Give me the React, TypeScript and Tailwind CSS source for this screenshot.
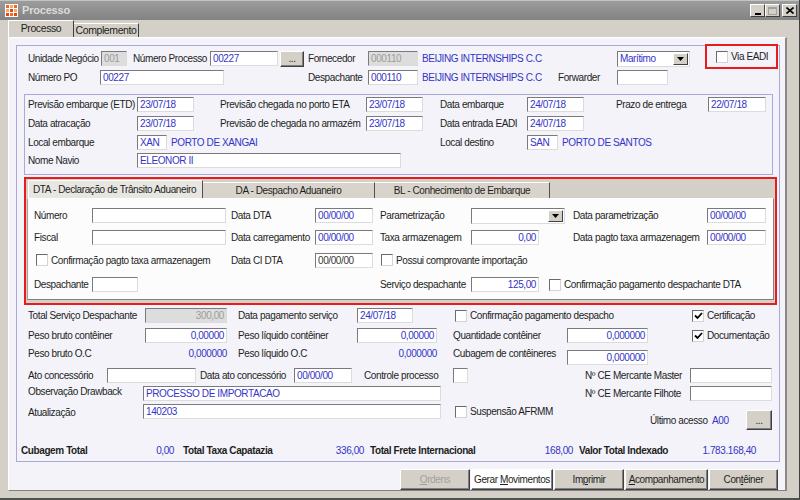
import React from 'react'

// campos no estilo Windows clássico
type FieldProps = { w: string; v?: string; r?: boolean; dis?: boolean; dark?: boolean; c?: string }

function Field({ w, v = '', r, dis, dark, c = '' }: FieldProps) {
  const tone = dis ? 'bg-[#dddddd] text-[#9c9c9c]' : dark ? 'bg-white text-[#3a3a3a]' : 'bg-white text-[#3434c8]'
  return (
    <div
      className={`${w} ${c} ${tone} ${r ? 'text-right' : ''} h-[15px] shrink-0 border border-t-[#7a7a7a] border-l-[#7a7a7a] border-r-[#dcdcdc] border-b-[#dcdcdc] px-[2px] leading-[13px] whitespace-nowrap overflow-hidden`}
    >
      {v}
    </div>
  )
}

function L({ w, c = '', children }: { w: string; c?: string; children: React.ReactNode }) {
  return <span className={`${w} ${c} shrink-0 whitespace-nowrap`}>{children}</span>
}

function Blue({ w = '', c = '', children }: { w?: string; c?: string; children: React.ReactNode }) {
  return <span className={`${w} ${c} shrink-0 whitespace-nowrap text-[#3434c8]`}>{children}</span>
}

function Select({ w, v = '' }: { w: string; v?: string }) {
  return (
    <div className={`${w} h-[16px] shrink-0 bg-white border border-t-[#7a7a7a] border-l-[#7a7a7a] border-r-[#dcdcdc] border-b-[#dcdcdc] flex items-center`}>
      <span className="flex-1 pl-[2px] text-[#3434c8] whitespace-nowrap">{v}</span>
      <span className="w-[15px] h-[12px] mr-[1px] bg-[#d4d0c8] border border-t-white border-l-white border-r-[#404040] border-b-[#404040] flex items-center justify-center">
        <svg width="7" height="4" viewBox="0 0 7 4">
          <path d="M0 0 H7 L3.5 4 Z" fill="#000" />
        </svg>
      </span>
    </div>
  )
}

function Check({ label, on, c = '' }: { label: string; on?: boolean; c?: string }) {
  return (
    <div className={`${c} flex items-center shrink-0 whitespace-nowrap`}>
      <span className="w-[12px] h-[12px] shrink-0 bg-white border border-t-[#6a6a6a] border-l-[#6a6a6a] border-r-[#d4d4d4] border-b-[#d4d4d4] flex items-center justify-center">
        {on && (
          <svg width="9" height="8" viewBox="0 0 9 8">
            <path d="M1 3.5 L3.5 6 L8 1" stroke="#000" strokeWidth="1.8" fill="none" />
          </svg>
        )}
      </span>
      <span className="ml-[3px]">{label}</span>
    </div>
  )
}

function Btn({ c = '', children }: { c?: string; children: React.ReactNode }) {
  return (
    <div
      className={`${c} shrink-0 flex items-center justify-center whitespace-nowrap border border-t-white border-l-white border-r-[#404040] border-b-[#404040] shadow-[inset_-1px_-1px_0_#808080]`}
    >
      {children}
    </div>
  )
}

function AppIcon() {
  return (
    <svg width="13" height="13" viewBox="0 0 13 13" className="shrink-0">
      <rect width="13" height="13" fill="#fff" />
      <rect x="1" y="1" width="3" height="3" fill="#f26a1b" />
      <rect x="5" y="1" width="3" height="3" fill="#f9a66c" />
      <rect x="9" y="1" width="3" height="3" fill="#f26a1b" />
      <rect x="1" y="5" width="3" height="3" fill="#f9a66c" />
      <rect x="5" y="5" width="3" height="3" fill="#e8480c" />
      <rect x="9" y="5" width="3" height="3" fill="#f9a66c" />
      <rect x="1" y="9" width="3" height="3" fill="#e8480c" />
      <rect x="5" y="9" width="3" height="3" fill="#f26a1b" />
      <rect x="9" y="9" width="3" height="3" fill="#e8480c" />
    </svg>
  )
}

function WinBtn({ children }: { children: React.ReactNode }) {
  return (
    <div className="w-[15px] h-[13px] bg-[#d4d0c8] flex items-center justify-center border border-t-white border-l-white border-r-[#404040] border-b-[#404040]">
      {children}
    </div>
  )
}

export default function App() {
  return (
    <div className="w-[800px] h-[500px] overflow-hidden bg-[#d4d0c8] font-['Liberation_Sans',Arial,sans-serif] text-[10px] tracking-[-0.4px] text-[#1e1e1e] border-r border-r-[#404040] border-b-2 border-b-[#505050]">
      {/* barra de título */}
      <div className="h-[20px] flex items-center bg-linear-to-b from-[#9c9c9c] to-[#838383] border-t border-t-[#c4c4c4]">
        <div className="ml-[5px]">
          <AppIcon />
        </div>
        <span className="ml-[4px] font-bold text-[11px] tracking-[-0.2px] text-[#dcdcdc]">Processo</span>
        <div className="ml-auto mr-[2px] flex items-center">
          <WinBtn>
            <span className="w-[6px] h-[2px] bg-black mt-[6px]" />
          </WinBtn>
          <WinBtn>
            <span className="w-[9px] h-[8px] border border-[#a0a0a0] border-t-2" />
          </WinBtn>
          <div className="ml-[2px]">
            <WinBtn>
              <svg width="8" height="7" viewBox="0 0 8 7">
                <path d="M0.5 0.5 L7.5 6.5 M7.5 0.5 L0.5 6.5" stroke="#000" strokeWidth="1.6" />
              </svg>
            </WinBtn>
          </div>
        </div>
      </div>

      {/* abas */}
      <div className="h-[17px] flex items-end pl-[8px] text-[10.5px]">
        <div className="w-[66px] h-[17px] bg-[#d4d0c8] border-t border-l border-t-white border-l-white border-r border-r-[#404040] flex items-center justify-center">
          Processo
        </div>
        <div className="w-[65px] h-[14px] bg-[#d4d0c8] border-t border-t-white border-r border-r-[#404040] flex items-center justify-center">
          Complemento
        </div>
      </div>

      <div className="ml-[8px] w-[779px] bg-[#f3f3f9] border-t border-t-white border-l border-l-white border-r-2 border-r-[#8a8a8a] border-b border-b-[#808080] pt-[7px]">
        <div className="ml-[7px] w-[764px] border border-[#aaaad8] pt-[3px] pb-[2px]">
          {/* linha 1 */}
          <div className="h-[19px] flex items-center pl-[11px]">
            <L w="w-[73px]">Unidade Negócio</L>
            <Field w="w-[26px]" v="001" dis />
            <L w="w-[77px]" c="ml-[6px]">Número Processo</L>
            <Field w="w-[68px]" v="00227" />
            <Btn c="ml-[2px] w-[24px] h-[16px] bg-[#d4d0c8]">...</Btn>
            <L w="w-[60px]" c="ml-[4px]">Fornecedor</L>
            <Field w="w-[50px]" v="000110" dis />
            <Blue w="w-[195px]" c="ml-[4px]">BEIJING INTERNSHIPS C.C</Blue>
            <Select w="w-[73px]" v="Marítimo" />
            <div className="ml-[15px] w-[73px] h-[25px] self-start -mt-[5px] border-2 border-[#e81c1c] flex items-center pl-[9px]">
              <Check label="Via EADI" />
            </div>
          </div>
          {/* linha 2 */}
          <div className="h-[19px] flex items-center pl-[11px]">
            <L w="w-[72px]">Número PO</L>
            <Field w="w-[124px]" v="00227" />
            <L w="w-[60px]" c="ml-[84px]">Despachante</L>
            <Field w="w-[50px]" v="000110" />
            <Blue w="w-[136px]" c="ml-[4px]">BEIJING INTERNSHIPS C.C</Blue>
            <L w="w-[59px]">Forwarder</L>
            <Field w="w-[51px]" />
          </div>

          {/* datas */}
          <div className="ml-[7px] mt-[7px] w-[749px] border border-[#aaaad8] pb-[4px]">
            <div className="h-[19px] flex items-center pl-[3px]">
              <L w="w-[109px]">Previsão embarque (ETD)</L>
              <Field w="w-[57px]" v="23/07/18" />
              <L w="w-[146px]" c="ml-[26px]">Previsão chegada no porto ETA</L>
              <Field w="w-[57px]" v="23/07/18" />
              <L w="w-[87px]" c="ml-[17px]">Data embarque</L>
              <Field w="w-[57px]" v="24/07/18" />
              <L w="w-[92px]" c="ml-[32px]">Prazo de entrega</L>
              <Field w="w-[58px]" v="22/07/18" />
            </div>
            <div className="h-[19px] flex items-center pl-[3px]">
              <L w="w-[109px]">Data atracação</L>
              <Field w="w-[57px]" v="23/07/18" />
              <L w="w-[146px]" c="ml-[26px]">Previsão de chegada no armazém</L>
              <Field w="w-[57px]" v="23/07/18" />
              <L w="w-[87px]" c="ml-[17px]">Data entrada EADI</L>
              <Field w="w-[57px]" v="24/07/18" />
            </div>
            <div className="h-[18px] flex items-center pl-[3px]">
              <L w="w-[109px]">Local embarque</L>
              <Field w="w-[30px]" v="XAN" />
              <Blue w="w-[269px]" c="ml-[4px]">PORTO DE XANGAI</Blue>
              <L w="w-[87px]">Local destino</L>
              <Field w="w-[31px]" v="SAN" />
              <Blue c="ml-[4px]">PORTO DE SANTOS</Blue>
            </div>
            <div className="h-[19px] flex items-center pl-[3px]">
              <L w="w-[109px]">Nome Navio</L>
              <Field w="w-[264px]" v="ELEONOR II" />
            </div>
          </div>

          {/* abas DTA / DA / BL */}
          <div className="ml-[7px] mt-[2px] w-[753px] border-2 border-[#e81c1c] bg-[#d4d0c8] px-[1px] pb-[3px]">
            <div className="h-[19px] flex items-end pl-[1px] whitespace-nowrap">
              <div className="w-[175px] h-[18px] bg-[#e8e6e0] border-t border-l border-t-white border-l-white border-r border-r-[#505050] flex items-center pl-[4px]">
                DTA - Declaração de Trânsito Aduaneiro
              </div>
              <div className="w-[172px] h-[16px] bg-[#d8d4cc] border-t border-t-white border-r border-r-[#505050] flex items-center justify-center">
                DA - Despacho Aduaneiro
              </div>
              <div className="w-[175px] h-[16px] bg-[#d8d4cc] border-t border-t-white border-r border-r-[#505050] flex items-center justify-center">
                BL - Conhecimento de Embarque
              </div>
            </div>
            <div className="bg-[#fcfcfc] border border-t-white border-l-[#a0a0a0] border-r-[#808080] border-b-[#808080] pt-[6px] pb-[1px] pl-[6px]">
              <div className="h-[21px] flex items-center">
                <L w="w-[58px]">Número</L>
                <Field w="w-[134px]" />
                <L w="w-[84px]" c="ml-[5px]">Data DTA</L>
                <Field w="w-[58px]" v="00/00/00" />
                <L w="w-[91px]" c="ml-[7px]">Parametrização</L>
                <Select w="w-[94px]" />
                <L w="w-[134px]" c="ml-[8px]">Data parametrização</L>
                <Field w="w-[59px]" v="00/00/00" />
              </div>
              <div className="h-[23px] flex items-center">
                <L w="w-[58px]">Fiscal</L>
                <Field w="w-[134px]" />
                <L w="w-[84px]" c="ml-[5px]">Data carregamento</L>
                <Field w="w-[58px]" v="00/00/00" />
                <L w="w-[91px]" c="ml-[7px]">Taxa armazenagem</L>
                <Field w="w-[68px]" v="0,00" r />
                <L w="w-[134px]" c="ml-[34px]">Data pagto taxa armazenagem</L>
                <Field w="w-[59px]" v="00/00/00" />
              </div>
              <div className="h-[22px] flex items-center">
                <Check c="w-[197px] pl-[2px]" label="Confirmação pagto taxa armazenagem" />
                <L w="w-[84px]">Data CI DTA</L>
                <Field w="w-[58px]" v="00/00/00" dark />
                <Check c="ml-[8px]" label="Possui comprovante importação" />
              </div>
              <div className="h-[27px] flex items-center">
                <L w="w-[58px]">Despachante</L>
                <Field w="w-[46px]" />
                <L w="w-[91px]" c="ml-[242px]">Serviço despachante</L>
                <Field w="w-[68px]" v="125,00" r />
                <Check c="ml-[10px]" label="Confirmação pagamento despachante DTA" />
              </div>
            </div>
          </div>

          {/* parte inferior */}
          <div className="h-[21px] flex items-center pl-[11px]">
            <L w="w-[117px]">Total Serviço Despachante</L>
            <Field w="w-[82px]" v="300,00" r dis />
            <L w="w-[119px]" c="ml-[11px]">Data pagamento serviço</L>
            <Field w="w-[56px]" v="24/07/18" />
            <Check c="ml-[42px] w-[237px]" label="Confirmação pagamento despacho" />
            <Check on label="Certificação" />
          </div>
          <div className="h-[19px] flex items-center pl-[11px]">
            <L w="w-[117px]">Peso bruto contêiner</L>
            <Field w="w-[82px]" v="0,00000" r />
            <L w="w-[119px]" c="ml-[11px]">Peso líquido contêiner</L>
            <Field w="w-[80px]" v="0,00000" r />
            <L w="w-[114px]" c="ml-[16px]">Quantidade contêiner</L>
            <Field w="w-[81px]" v="0,000000" r />
            <Check c="ml-[44px]" on label="Documentação" />
          </div>
          <div className="h-[21px] flex items-start pl-[11px]">
            <L w="w-[117px]" c="mt-[2px] leading-[13px]">Peso bruto O.C</L>
            <Blue w="w-[82px]" c="mt-[2px] leading-[13px] text-right">0,000000</Blue>
            <L w="w-[119px]" c="ml-[11px] mt-[2px] leading-[13px]">Peso líquido O.C</L>
            <Blue w="w-[80px]" c="mt-[2px] leading-[13px] text-right">0,000000</Blue>
            <L w="w-[114px]" c="ml-[16px] mt-[2px] leading-[13px]">Cubagem de contêineres</L>
            <Field w="w-[81px]" c="mt-[5px]" v="0,000000" r />
          </div>
          <div className="h-[18px] flex items-center pl-[11px]">
            <L w="w-[79px]">Ato concessório</L>
            <Field w="w-[89px]" />
            <L w="w-[94px]" c="ml-[4px]">Data ato concessório</L>
            <Field w="w-[58px]" v="00/00/00" />
            <L w="w-[89px]" c="ml-[12px]">Controle processo</L>
            <Field w="w-[15px]" />
            <L w="w-[105px]" c="ml-[117px]">Nº CE Mercante Master</L>
            <Field w="w-[82px]" />
          </div>
          <div className="h-[18px] flex items-center pl-[11px]">
            <L w="w-[115px]" c="-mt-[3px]">Observação Drawback</L>
            <Field w="w-[298px]" v="PROCESSO DE IMPORTACAO" />
            <L w="w-[105px]" c="ml-[144px]">Nº CE Mercante Filhote</L>
            <Field w="w-[82px]" />
          </div>
          <div className="h-[19px] flex items-center pl-[11px]">
            <L w="w-[115px]" c="mt-[2px]">Atualização</L>
            <Field w="w-[298px]" v="140203" />
            <Check c="ml-[14px] w-[195px]" label="Suspensão AFRMM" />
            <div className="self-start mt-[8px] h-[20px] flex items-center">
              <L w="w-[62px]">Último acesso</L>
              <Blue w="w-[34px]">A00</Blue>
              <Btn c="w-[26px] h-[20px] bg-[#d4d0c8]">...</Btn>
            </div>
          </div>

          {/* totais */}
          <div className="mt-[21px] h-[17px] flex items-center pl-[4px]">
            <div className="w-[153px] flex justify-between">
              <b>Cubagem Total</b>
              <Blue>0,00</Blue>
            </div>
            <div className="ml-[9px] w-[181px] flex justify-between">
              <b>Total Taxa Capatazia</b>
              <Blue>336,00</Blue>
            </div>
            <div className="ml-[6px] w-[203px] flex justify-between">
              <b>Total Frete Internacional</b>
              <Blue>168,00</Blue>
            </div>
            <div className="ml-[6px] w-[177px] flex justify-between">
              <b>Valor Total Indexado</b>
              <Blue>1.783.168,40</Blue>
            </div>
          </div>
        </div>

        {/* botões */}
        <div className="mt-[7px] h-[21px] flex justify-end pr-[7px]">
          <Btn c="w-[70px] h-[21px] bg-[#d4d0c8] text-[#a0a0a0]">
            <span><u>O</u>rdens</span>
          </Btn>
          <Btn c="ml-[1px] w-[82px] h-[21px] bg-white">
            <span>Gerar <u>M</u>ovimentos</span>
          </Btn>
          <Btn c="ml-[1px] w-[70px] h-[21px] bg-[#d4d0c8]">
            <span>Im<u>p</u>rimir</span>
          </Btn>
          <Btn c="ml-[1px] w-[83px] h-[21px] bg-[#d4d0c8]">
            <span><u>A</u>companhamento</span>
          </Btn>
          <Btn c="ml-[1px] w-[69px] h-[21px] bg-[#d4d0c8]">
            <span>Con<u>t</u>êiner</span>
          </Btn>
        </div>
      </div>
    </div>
  )
}
